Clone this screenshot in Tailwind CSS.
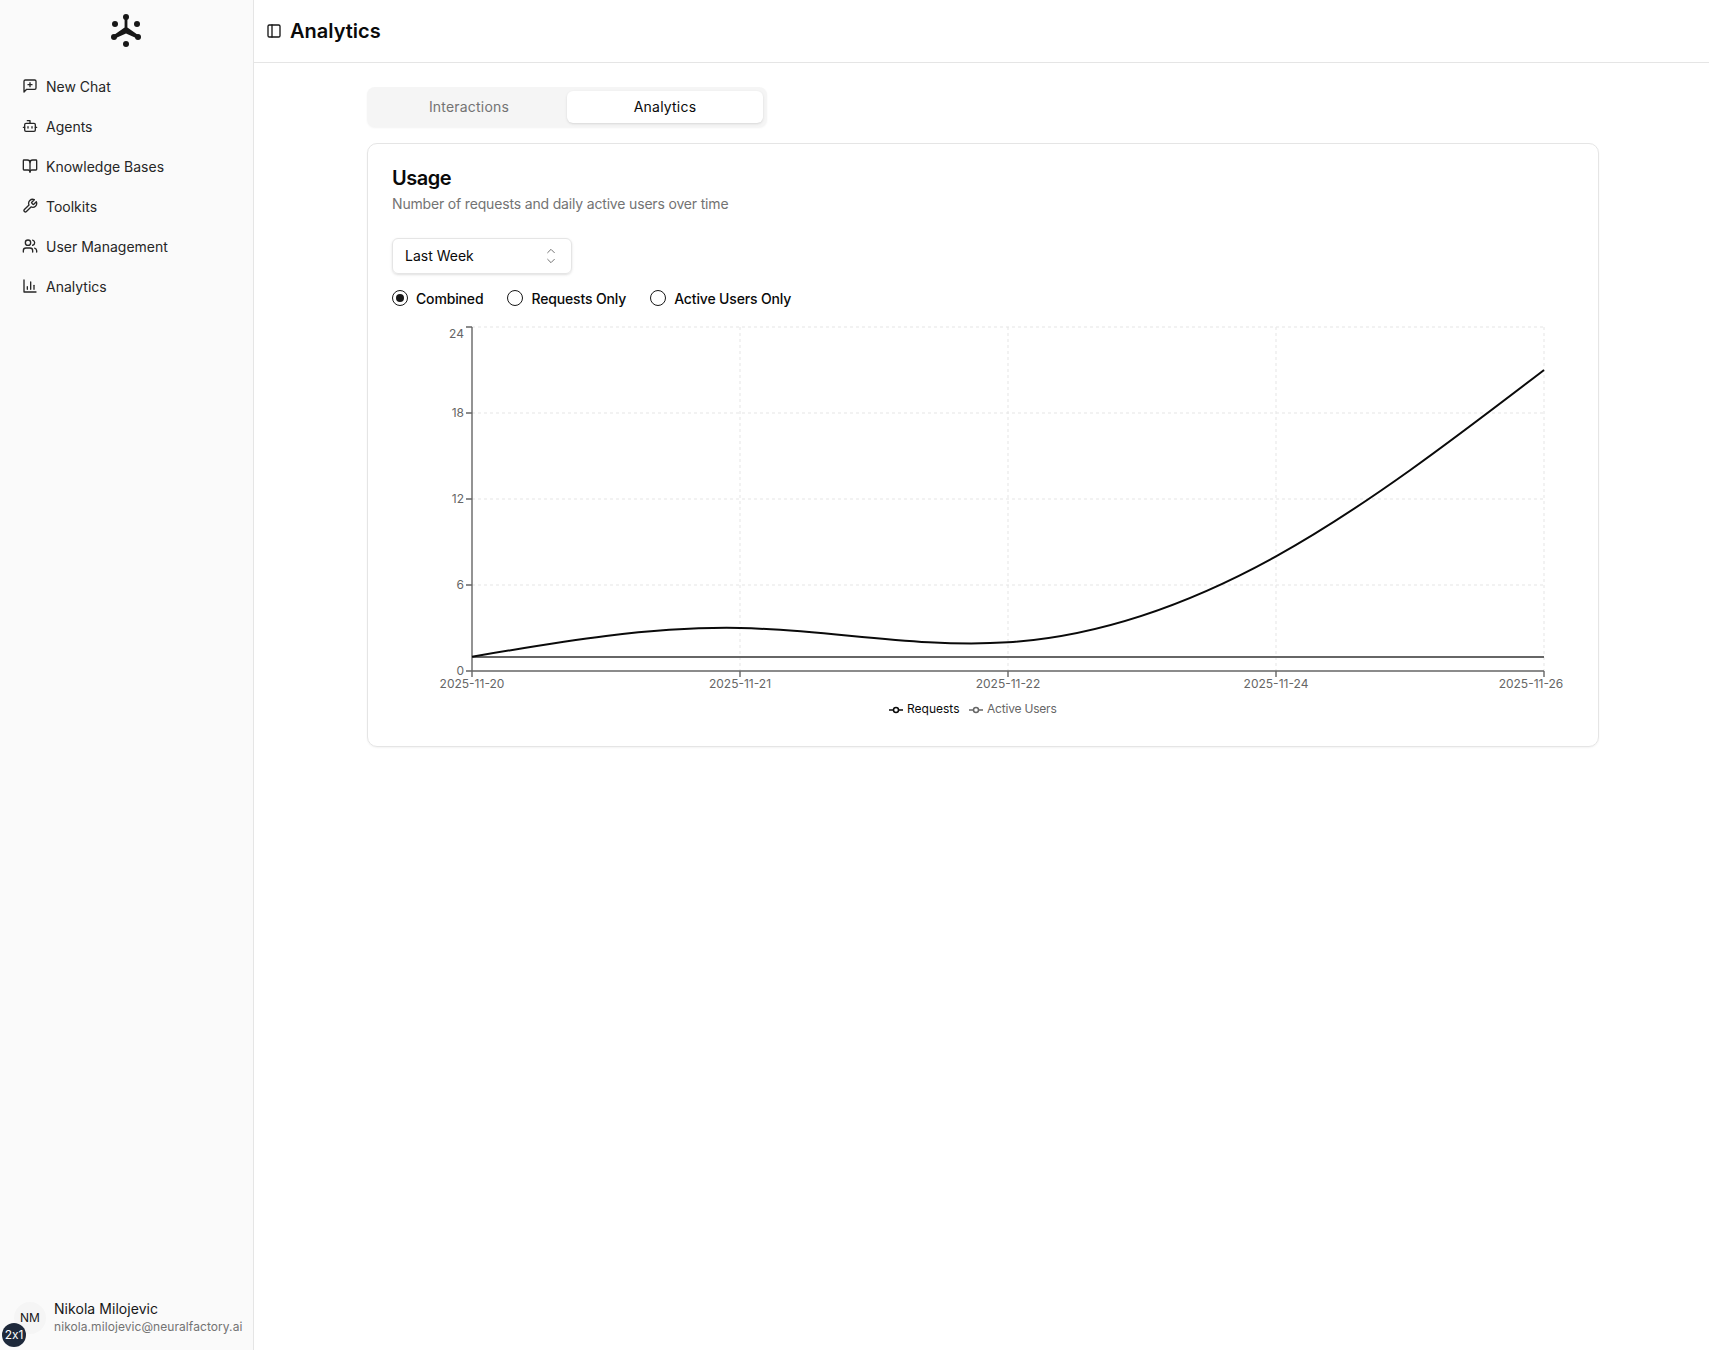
<!DOCTYPE html>
<html lang="en">
<head>
  <meta charset="UTF-8" />
  <meta name="viewport" content="width=device-width, initial-scale=1.0"/>
  <title>Analytics</title>
  <script src="https://cdn.jsdelivr.net/npm/@tailwindcss/browser@4"></script>
</head>
<body class="bg-white text-[#0a0a0a] font-['Inter',sans-serif]">
  <div class="flex h-[1350px] overflow-hidden">

    <!-- Sidebar -->
    <aside class="relative w-[254px] shrink-0 flex flex-col bg-[#fafafa] border-r border-[#e5e5e5]">
      <div class="h-[62px] flex items-center justify-center">
        <svg class="w-[36px] h-[36px] ml-[-1px]" viewBox="0 0 36 36" fill="#171717">
          <path d="M16.6 4v10.4L5.2 22.6 6.8 25.4 18 20.6 29.2 25.4 30.8 22.6 19.4 14.4V4z"/>
          <circle cx="18" cy="4" r="3"/>
          <circle cx="6" cy="24" r="3"/>
          <circle cx="30" cy="24" r="3"/>
          <circle cx="7" cy="11" r="3"/>
          <circle cx="29" cy="11" r="3"/>
          <circle cx="18" cy="31" r="3"/>
        </svg>
      </div>

      <nav class="flex flex-col px-[22px] pt-[4px] text-[14px] text-[#262626]">
        <a class="h-[40px] flex items-center gap-[8px]">
          <svg class="w-[16px] h-[16px]" viewBox="0 0 24 24" fill="none" stroke="currentColor" stroke-width="2" stroke-linecap="round" stroke-linejoin="round"><path d="M21 15a2 2 0 0 1-2 2H7l-4 4V5a2 2 0 0 1 2-2h14a2 2 0 0 1 2 2z"/><path d="M12 7v6"/><path d="M9 10h6"/></svg>
          New Chat
        </a>
        <a class="h-[40px] flex items-center gap-[8px]">
          <svg class="w-[16px] h-[16px]" viewBox="0 0 24 24" fill="none" stroke="currentColor" stroke-width="2" stroke-linecap="round" stroke-linejoin="round"><path d="M12 8V4H8"/><rect width="16" height="12" x="4" y="8" rx="2"/><path d="M2 14h2"/><path d="M20 14h2"/><path d="M15 13v2"/><path d="M9 13v2"/></svg>
          Agents
        </a>
        <a class="h-[40px] flex items-center gap-[8px]">
          <svg class="w-[16px] h-[16px]" viewBox="0 0 24 24" fill="none" stroke="currentColor" stroke-width="2" stroke-linecap="round" stroke-linejoin="round"><path d="M12 7v14"/><path d="M3 18a1 1 0 0 1-1-1V4a1 1 0 0 1 1-1h5a4 4 0 0 1 4 4 4 4 0 0 1 4-4h5a1 1 0 0 1 1 1v13a1 1 0 0 1-1 1h-6a3 3 0 0 0-3 3 3 3 0 0 0-3-3z"/></svg>
          Knowledge Bases
        </a>
        <a class="h-[40px] flex items-center gap-[8px]">
          <svg class="w-[16px] h-[16px]" viewBox="0 0 24 24" fill="none" stroke="currentColor" stroke-width="2" stroke-linecap="round" stroke-linejoin="round"><path d="M14.7 6.3a1 1 0 0 0 0 1.4l1.6 1.6a1 1 0 0 0 1.4 0l3.77-3.77a6 6 0 0 1-7.94 7.94l-6.91 6.91a2.12 2.12 0 0 1-3-3l6.91-6.91a6 6 0 0 1 7.94-7.94l-3.76 3.76z"/></svg>
          Toolkits
        </a>
        <a class="h-[40px] flex items-center gap-[8px]">
          <svg class="w-[16px] h-[16px]" viewBox="0 0 24 24" fill="none" stroke="currentColor" stroke-width="2" stroke-linecap="round" stroke-linejoin="round"><path d="M16 21v-2a4 4 0 0 0-4-4H6a4 4 0 0 0-4 4v2"/><circle cx="9" cy="7" r="4"/><path d="M22 21v-2a4 4 0 0 0-3-3.87"/><path d="M16 3.13a4 4 0 0 1 0 7.75"/></svg>
          User Management
        </a>
        <a class="h-[40px] flex items-center gap-[8px]">
          <svg class="w-[16px] h-[16px]" viewBox="0 0 24 24" fill="none" stroke="currentColor" stroke-width="2" stroke-linecap="round" stroke-linejoin="round"><path d="M3 3v18h18"/><path d="M18 17V11"/><path d="M13 17V6"/><path d="M8 17v-4"/></svg>
          Analytics
        </a>
      </nav>

      <div class="mt-auto flex items-center gap-[8px] pl-[14px] pb-[15px]">
        <div class="w-[32px] h-[32px] rounded-full bg-[#f5f5f5] flex items-center justify-center text-[12px] text-[#171717]">NM</div>
        <div class="leading-none">
          <div class="text-[14px] leading-[18px] tracking-[0.05px] text-[#171717]">Nikola Milojevic</div>
          <div class="text-[12px] leading-[17px] tracking-[0.07px] text-[#737373]">nikola.milojevic@neuralfactory.ai</div>
        </div>
      </div>
      <div class="absolute left-[2px] bottom-[3px] w-[24px] h-[24px] rounded-full bg-[#1e293b] flex items-center justify-center text-[12px] text-white [font-variant-ligatures:no-contextual]">2x1</div>
    </aside>

    <!-- Main -->
    <main class="flex-1 min-w-0">
      <header class="h-[63px] flex items-center gap-[8px] pl-[12px] border-b border-[#e5e5e5]">
        <svg class="w-[16px] h-[16px]" viewBox="0 0 24 24" fill="none" stroke="#171717" stroke-width="2" stroke-linecap="round" stroke-linejoin="round"><rect width="18" height="18" x="3" y="3" rx="2"/><path d="M9 3v18"/></svg>
        <h1 class="text-[20px] font-semibold">Analytics</h1>
      </header>

      <div class="ml-[113px] w-[1232px] pt-[24px]">
        <!-- Tabs -->
        <div class="w-[400px] h-[40px] grid grid-cols-2 p-[4px] rounded-lg bg-[#f5f5f5] shadow-xs text-[14px] tracking-[0.2px]">
          <button class="text-[#737373] pb-[1px]">Interactions</button>
          <button class="bg-white rounded-md shadow-sm text-[#0a0a0a] pb-[1px]">Analytics</button>
        </div>

        <!-- Card -->
        <section class="mt-[16px] h-[604px] rounded-[10px] border border-[#e5e5e5] shadow-xs px-[24px] pt-[22px]">
          <h2 class="text-[20px] leading-[24px] font-semibold tracking-[-0.5px]">Usage</h2>
          <p class="mt-[4px] text-[14px] leading-[20px] tracking-[-0.17px] text-[#737373]">Number of requests and daily active users over time</p>

          <div class="mt-[24px] w-[180px] h-[36px] flex items-center justify-between pl-[12px] pr-[12px] pb-[1px] rounded-md border border-[#e5e5e5] shadow-sm text-[14px]">
            <span>Last Week</span>
            <svg class="w-[16px] h-[16px] text-[#737373]" viewBox="0 0 24 24" fill="none" stroke="currentColor" stroke-width="1.5" stroke-linecap="round" stroke-linejoin="round"><path d="m7 17 5 5 5-5"/><path d="m7 7 5-5 5 5"/></svg>
          </div>

          <div class="mt-[15px] h-[18px] flex items-center gap-[24px] text-[14px] font-[450] tracking-[-0.15px]">
            <label class="flex items-center gap-[8px]">
              <span class="w-[16px] h-[16px] rounded-full border border-[#171717] flex items-center justify-center"><span class="w-[8px] h-[8px] rounded-full bg-[#171717]"></span></span>
              Combined
            </label>
            <label class="flex items-center gap-[8px]">
              <span class="w-[16px] h-[16px] rounded-full border border-[#171717]"></span>
              Requests Only
            </label>
            <label class="flex items-center gap-[8px]">
              <span class="w-[16px] h-[16px] rounded-full border border-[#171717]"></span>
              Active Users Only
            </label>
          </div>

          <!-- Chart, viewBox origin is the card's inner left edge -->
          <svg class="block mt-[11px] ml-[-24px] w-[1230px] h-[400px]" viewBox="368 318 1230 400" font-size="12" fill="#666" style="font-family:Inter,sans-serif">
            <g stroke="#e5e5e5" stroke-dasharray="3 3" fill="none">
              <path d="M472 327H1544M472 413H1544M472 499H1544M472 585H1544"/>
              <path d="M740 327V671M1008 327V671M1276 327V671M1544 327V671"/>
            </g>
            <g stroke="#666" stroke-width="1.4" fill="none">
              <path d="M472 327V671M466 327H472M466 413H472M466 499H472M466 585H472M466 671H472"/>
              <path d="M472 671H1544M472 671V677M740 671V677M1008 671V677M1276 671V677M1544 671V677"/>
            </g>
            <g text-anchor="end">
              <text x="464" y="338">24</text>
              <text x="464" y="417">18</text>
              <text x="464" y="503">12</text>
              <text x="464" y="589">6</text>
              <text x="464" y="675">0</text>
            </g>
            <g text-anchor="middle">
              <text x="472" y="688">2025-11-20</text>
              <text x="740" y="688">2025-11-21</text>
              <text x="1008" y="688">2025-11-22</text>
              <text x="1276" y="688">2025-11-24</text>
              <text x="1531" y="688">2025-11-26</text>
            </g>
            <path d="M472 657H1544" stroke="#666" stroke-width="2" fill="none"/>
            <path d="M472 656.67C561.33 641.48 650.67 626.29 740 628C829.33 629.7 918.67 648.31 1008 642.33C1097.33 636.36 1186.67 605.81 1276 556.33C1365.33 506.85 1454.67 438.4 1544 370" stroke="#0a0a0a" stroke-width="2" fill="none"/>
            <!-- Legend -->
            <g fill="#fff" stroke-width="1.5">
              <path d="M889 710H903" stroke="#0a0a0a"/>
              <circle cx="896" cy="710" r="2.5" stroke="#0a0a0a"/>
              <path d="M969 710H983" stroke="#666"/>
              <circle cx="976" cy="710" r="2.5" stroke="#666"/>
            </g>
            <text x="907" y="713" fill="#0a0a0a">Requests</text>
            <text x="987" y="713" letter-spacing="-0.2">Active Users</text>
          </svg>
        </section>
      </div>
    </main>
  </div>
</body>
</html>
